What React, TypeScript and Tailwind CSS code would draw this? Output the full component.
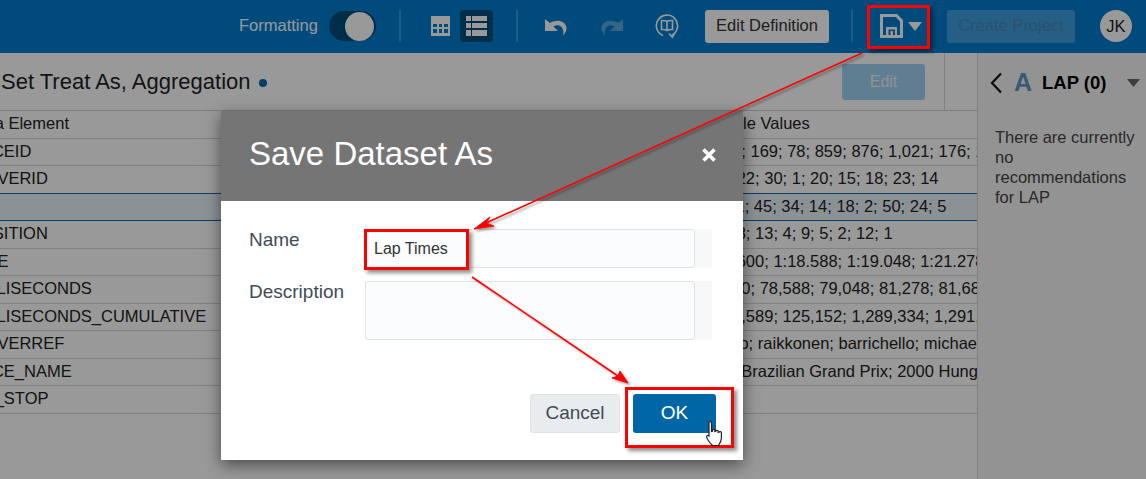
const rows = [
    { name: 'Data Element', values: 'Sample Values' },
    { name: 'RACEID', values: '1,021; 169; 78; 859; 876; 1,021; 176; 1,052; 842' },
    { name: 'DRIVERID', values: '3; 7; 22; 30; 1; 20; 15; 18; 23; 14' },
    { name: 'LAP', values: '41; 11; 45; 34; 14; 18; 2; 50; 24; 5', selected: true },
    { name: 'POSITION', values: '3; 7; 8; 13; 4; 9; 5; 2; 12; 1' },
    { name: 'TIME', values: '1:20.600; 1:18.588; 1:19.048; 1:21.278; 1:21.682' },
    { name: 'MILLISECONDS', values: '80,600; 78,588; 79,048; 81,278; 81,682; 82,104' },
    { name: 'MILLISECONDS_CUMULATIVE', values: '1,204,589; 125,152; 1,289,334; 1,291,020; 1,300,410' },
    { name: 'DRIVERREF', values: 'alonso; raikkonen; barrichello; michael_schumacher' },
    { name: 'RACE_NAME', values: '2000 Brazilian Grand Prix; 2000 Hungarian Grand Prix' },
    { name: 'PIT_STOP', values: '' },
];

function Divider() {
    return <div className="h-8 w-[2px] bg-[#2f99df]" />;
}

function Toolbar() {
    return (
        <div className="flex h-[53px] shrink-0 items-center bg-[#007dcf] pb-px pl-[239px] text-[16.5px] text-white">
            <span className="w-[90px] pb-px">Formatting</span>
            <div className="flex h-[30px] w-[47px] items-center justify-end rounded-full bg-[#004b7c] pr-[2px]">
                <div className="h-[29px] w-[29px] rounded-full bg-white" />
            </div>
            <div className="ml-[23px]"><Divider /></div>
            <svg className="ml-[30px]" width="19" height="20" viewBox="0 0 19 20" fill="#fff">
                <path d="M0 0h19v20H0zM2 8v3h4V8zm6 0v3h3V8zm5 0v3h4V8zM2 13v4h4v-4zm6 0v4h3v-4zm5 0v4h4v-4z" fillRule="evenodd" />
            </svg>
            <div className="ml-[10px] flex h-8 w-[33px] items-center justify-center rounded bg-[#004b7c]">
                <svg width="21" height="20" viewBox="0 0 21 20" fill="#fff">
                    <path d="M0 0h5v5H0zM6 0h15v5H6zM0 7h5v5H0zM6 7h15v5H6zM0 14h5v6H0zM6 14h15v6H6z" />
                </svg>
            </div>
            <div className="ml-[23px]"><Divider /></div>
            <svg className="ml-[27px] mt-[2px]" width="22" height="18" viewBox="0 0 22 18" fill="#fff">
                <path d="M0 1v12h13l-4.500-4.500C12 6 17 7 18 12c.5 2 .5 3.500 0 5.500 3-3 4-6.500 3.500-8.500C20 3 12 .5 5 5z" />
            </svg>
            <svg className="ml-[34px] mt-[2px]" width="22" height="18" viewBox="0 0 22 18" fill="#5aa8dc">
                <path d="M22 1v12H9l4.500-4.500C10 6 5 7 4 12c-.5 2-.5 3.500 0 5.500-3-3-4-6.500-3.500-8.500C2 3 10 .5 17 5z" />
            </svg>
            <svg className="ml-[32px]" width="24" height="26" viewBox="0 0 24 26" fill="none" stroke="#fff" strokeWidth="1.600">
                <path d="M8 22.500A10.600 10.600 0 1 1 17 22" />
                <path d="M14 20.500l3.200 3.600 2.600-3.800" />
                <path d="M12 8.500c-1.500-1-3.500-1.200-5.500-1v9c2-.2 4 0 5.500 1 1.500-1 3.500-1.200 5.500-1v-9c-2-.2-4 0-5.500 1zM12 8.500v9" />
            </svg>
            <button className="ml-[26px] h-[33px] w-[124px] rounded-[3px] bg-white pb-px text-[#333]">Edit Definition</button>
            <div className="ml-[22px]"><Divider /></div>
            <svg className="ml-[27px]" width="23" height="24" viewBox="0 0 23 24" fill="#fff">
                <path d="M0 0h17l6 6v18H0zM3 3v18h3v-8h11v8h3V7.500L15.800 3zM8.500 15.500V21H15v-5.500zM10.500 17h2.500v4h-2.500z" fillRule="evenodd" />
            </svg>
            <svg className="ml-[5px]" width="14" height="9" viewBox="0 0 14 9" fill="#fff"><path d="M0 0h14L7 9z" /></svg>
            <button className="ml-[25px] h-[33px] w-[128px] rounded-[3px] bg-[#3f9fe0] pb-px text-[#4a86b8]">Create Project</button>
            <div className="ml-[25px] flex h-8 w-8 items-center justify-center rounded-full bg-white text-[#222]">JK</div>
        </div>
    );
}

function DataTable() {
    return (
        <div className="border-t border-[#cfcfcf] text-[16.5px]">
            {rows.map((row) => (
                <div
                    key={row.name}
                    className={`flex h-[27.5px] items-center overflow-hidden border-b pb-px ${row.selected ? 'relative -mt-px h-[28.5px] border-t border-[#0b6aa8] bg-[#e8f3fb]' : 'border-[#d8d8d8]'}`}
                >
                    <div className="w-[700px] shrink-0 whitespace-nowrap -indent-[31px]">{row.name}</div>
                    <div className="whitespace-nowrap">{row.values}</div>
                </div>
            ))}
        </div>
    );
}

function Background() {
    return (
        <div className="flex h-[479px] flex-col overflow-hidden bg-white font-['Liberation_Sans',Arial,sans-serif] text-[16.5px] text-[#222]">
            <Toolbar />
            <div className="flex min-h-0 flex-1">
                <div className="w-[977px] shrink-0">
                    <div className="flex h-[57px] items-center">
                        <span className="w-[842px] whitespace-nowrap pl-px text-[22px]">
                            Set Treat As, Aggregation <span className="ml-[2px] inline-block h-2 w-2 rounded-full bg-[#0069ab] align-[2px]" />
                        </span>
                        <button className="h-9 w-[83px] rounded-[3px] bg-[#a0d2f3] text-base text-[#f0f4f7]">Edit</button>
                        <div className="ml-[19px] h-[57px] w-px bg-[#d8d8d8]" />
                    </div>
                    <DataTable />
                </div>
                <div className="flex-1 border-l border-[#d8d8d8] bg-[#f6f6f6] pl-[12px] pt-[16px]">
                    <div className="flex items-center">
                        <svg width="13" height="22" viewBox="0 0 13 22" fill="none" stroke="#111" strokeWidth="2.200"><path d="M11 1.500 2 11l9 9.500" /></svg>
                        <span className="ml-[11px] w-[19px] text-[25px] font-bold leading-none text-[#5f97c4]">A</span>
                        <span className="ml-[9px] text-[18.5px] font-bold text-black">LAP (0)</span>
                        <svg className="ml-[21px]" width="13" height="8" viewBox="0 0 13 8" fill="#666"><path d="M0 0h13L6.500 8z" /></svg>
                    </div>
                    <p className="ml-[5px] mt-[30px] w-[140px] leading-5 text-[#444]">There are currently no recommendations for LAP</p>
                </div>
            </div>
        </div>
    );
}

function SaveDialog() {
    return (
        <div className="absolute left-[221px] top-[111px] w-[522px] bg-white shadow-[0_5px_15px_rgba(0,0,0,0.5)]">
            <div className="flex h-[90px] items-center justify-between bg-[#757575] pb-[6px] pl-[28px] pr-[27px] text-white">
                <h2 className="text-[33px] leading-none">Save Dataset As</h2>
                <svg className="mt-1" width="14" height="14" viewBox="0 0 14 14" stroke="#fff" strokeWidth="3.600"><path d="M1.500 1.500l11 11M12.500 1.500l-11 11" /></svg>
            </div>
            <div className="h-[259px] pl-[28px] pt-[28px] text-[#414b55]">
                <div className="flex">
                    <label className="w-[116px] text-[19px] leading-[22px]">Name</label>
                    <div className="flex">
                        <div className="flex h-[39px] w-[330px] items-center rounded-[3px] border border-[#dde3ea] bg-[#fbfcfe] pl-2 text-base text-[#333]">Lap Times</div>
                        <div className="h-[39px] w-[17px] bg-[#f8f8f8]" />
                    </div>
                </div>
                <div className="mt-[13px] flex">
                    <label className="w-[116px] text-[19px] leading-[22px]">Description</label>
                    <div className="flex">
                        <div className="h-[59px] w-[330px] rounded-[3px] border border-[#dde3ea] bg-[#fbfcfe]" />
                        <div className="h-[59px] w-[17px] bg-[#f8f8f8]" />
                    </div>
                </div>
                <div className="ml-[281px] mt-[54px] flex gap-[13px]">
                    <button className="h-[39px] w-[90px] rounded-[3px] border border-[#dfe3e7] bg-[#e9ecef] text-[19px] text-[#414b55]">Cancel</button>
                    <button className="h-[39px] w-[83px] rounded-[3px] bg-[#0066a6] text-[19px] text-white">OK</button>
                </div>
            </div>
        </div>
    );
}

function Annotations() {
    const box = 'absolute border-[3px] border-[#ff0000] shadow-[3px_3px_4px_rgba(0,0,0,0.45)]';
    return (
        <>
            <div className={`${box} left-[867px] top-[5px] h-[44px] w-[63px]`} />
            <div className={`${box} left-[364px] top-[229px] h-[41px] w-[105px]`} />
            <div className={`${box} left-[625px] top-[387px] h-[61px] w-[109px]`} />
            <svg className="absolute left-0 top-0 drop-shadow-[2px_2px_1px_rgba(0,0,0,0.35)]" width="1146" height="479" viewBox="0 0 1146 479" fill="#ff0000" stroke="#ff0000">
                <path d="M862 53 486 223" strokeWidth="1.600" fill="none" />
                <path d="M474 229 490 217 486 223 494 226z" />
                <path d="M472 277 618 376" strokeWidth="1.600" fill="none" />
                <path d="M628 383 620 371 618 376 612 378z" />
            </svg>
            <svg className="absolute left-[706px] top-[421px]" width="18" height="26" viewBox="0 0 18 26" fill="#fff" stroke="#222" strokeWidth="1.200">
                <path d="M3 1.500c0-1.200 2.500-1.200 2.500 0v9l1-.3V9c0-1 2.300-1 2.300 0v1.500l1-.2V10c0-1 2.300-1 2.300 0v1.300l1-.1c.2-.8 2.300-.8 2.300.5v5.300c0 3-1.500 5.500-3 7.500H6.500C4.500 22.500 1 18.500 .7 16c-.2-1.500 1-2 2.300-1z" />
            </svg>
        </>
    );
}

export default function App() {
    return (
        <div className="relative h-[479px] w-[1146px] overflow-hidden font-['Liberation_Sans',Arial,sans-serif]">
            <Background />
            <div className="absolute inset-0 bg-black/40" />
            <SaveDialog />
            <Annotations />
        </div>
    );
}
